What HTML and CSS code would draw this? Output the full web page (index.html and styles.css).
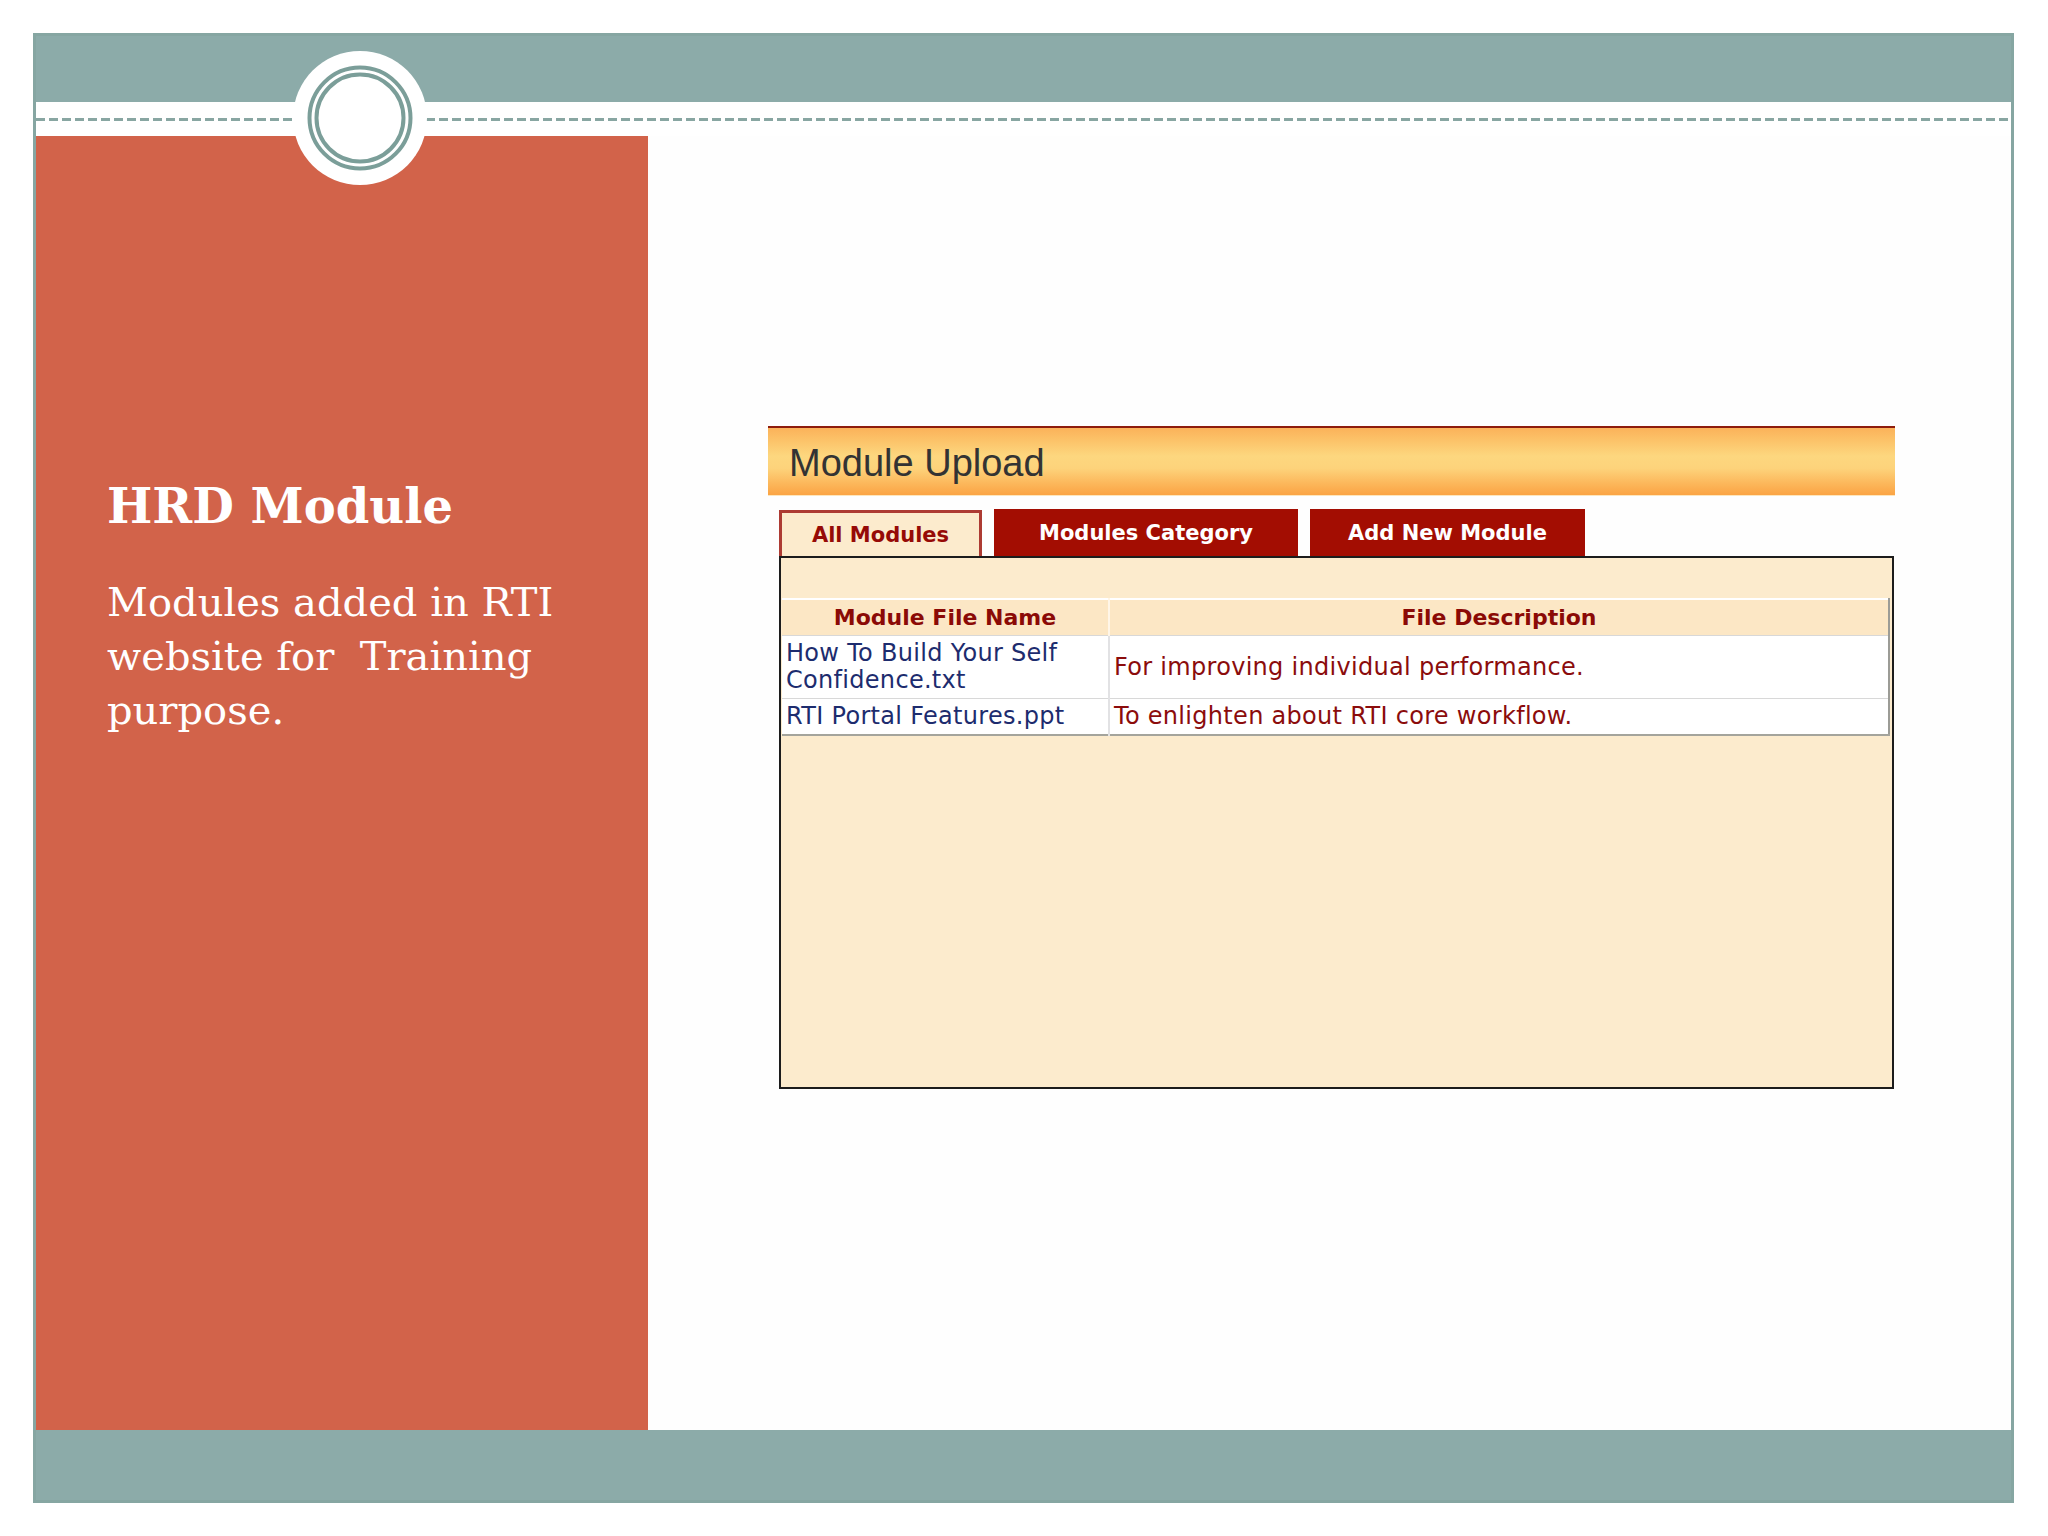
FILE: index.html
```html
<!DOCTYPE html>
<html lang="en">
<head>
<meta charset="utf-8">
<title>HRD Module</title>
<link rel="stylesheet" href="styles.css">
</head>
<body>
<div class="slide">
  <div class="top-band"></div>
  <div class="rule-band"><div class="dash-line"></div></div>
  <div class="main">
    <div class="left-panel">
      <h1 class="title">HRD Module</h1>
      <p class="body-text">Modules added in RTI website for&nbsp; Training purpose.</p>
    </div>
    <div class="right-panel">
      <div class="widget">
        <div class="widget-header">Module Upload</div>
        <div class="tabs">
          <div class="tab tab-active tab-all">All Modules</div>
          <div class="tab tab-cat">Modules Category</div>
          <div class="tab tab-add">Add New Module</div>
        </div>
        <div class="tab-body">
          <table class="modules">
            <thead>
              <tr>
                <th class="col-name">Module File Name</th>
                <th class="col-desc">File Description</th>
              </tr>
            </thead>
            <tbody>
              <tr>
                <td class="file">How To Build Your Self<br>Confidence.txt</td>
                <td class="desc">For improving individual performance.</td>
              </tr>
              <tr>
                <td class="file">RTI Portal Features.ppt</td>
                <td class="desc">To enlighten about RTI core workflow.</td>
              </tr>
            </tbody>
          </table>
        </div>
      </div>
    </div>
  </div>
  <div class="bottom-band"></div>
  <div class="medallion">
    <svg width="134" height="134" viewBox="0 0 134 134">
      <circle cx="67" cy="67" r="67" fill="#ffffff"/>
      <circle cx="67" cy="67" r="50.5" fill="none" stroke="#7b9e99" stroke-width="4"/>
      <circle cx="67" cy="67" r="43.5" fill="none" stroke="#7b9e99" stroke-width="4"/>
    </svg>
  </div>
</div>
</body>
</html>
```

FILE: styles.css
```css
html, body {
  margin: 0;
  padding: 0;
  background: #ffffff;
}

.slide {
  position: relative;
  box-sizing: border-box;
  width: 1981px;
  height: 1470px;
  margin: 33px 0 0 33px;
  border: 3px solid #86a6a2;
  display: flex;
  flex-direction: column;
  background: #fefefe;
}

.top-band {
  height: 66px;
  background: #8caba9;
  flex: none;
}

.rule-band {
  height: 34px;
  flex: none;
  box-sizing: border-box;
  padding-top: 16px;
  background: #ffffff;
}

.dash-line {
  height: 3px;
  background: repeating-linear-gradient(to right, #88a6a2 0 9px, transparent 9px 13px);
}

.main {
  flex: 1;
  display: flex;
}

.left-panel {
  width: 612px;
  flex: none;
  background: #d2634a;
  box-sizing: border-box;
  padding: 342px 30px 0 71px;
  color: #ffffff;
}

.title {
  margin: 0;
  font-family: "DejaVu Serif", "Liberation Serif", serif;
  font-weight: bold;
  font-size: 48px;
  line-height: 56px;
}

.body-text {
  margin: 41px 0 0 0;
  font-family: "DejaVu Serif", "Liberation Serif", serif;
  font-size: 40px;
  line-height: 54px;
}

.right-panel {
  flex: 1;
  box-sizing: border-box;
  padding: 290px 0 0 120px;
  background: #fefefe;
}

.widget {
  width: 1127px;
}

.widget-header {
  box-sizing: border-box;
  height: 70px;
  border-top: 2px solid #8e1c0c;
  border-bottom: 1px solid #fde6bd;
  background: linear-gradient(to bottom, #fbb25a 0%, #fcc46a 20%, #fdd77f 42%, #fdd37b 60%, #fcb85c 82%, #fba444 100%);
  padding-left: 21px;
  font-family: "Liberation Sans", Arial, sans-serif;
  font-size: 38px;
  line-height: 70px;
  color: #333333;
}

.tabs {
  display: flex;
  gap: 12px;
  margin-top: 13px;
  padding-left: 11px;
  height: 47px;
}

.tab {
  box-sizing: border-box;
  height: 47px;
  display: flex;
  align-items: center;
  justify-content: center;
  font-family: "DejaVu Sans", Verdana, sans-serif;
  font-weight: bold;
  font-size: 21px;
  color: #ffffff;
  background: #a30d02;
}

.tab-active {
  background: #fcebcd;
  color: #960a06;
  border: 3px solid #ad3b33;
  border-bottom: none;
  margin-top: 1px;
  height: 46px;
}

.tab-all { width: 203px; }
.tab-cat { width: 304px; }
.tab-add { width: 275px; }

.tab-body {
  box-sizing: border-box;
  width: 1115px;
  height: 533px;
  margin-left: 11px;
  border: 2px solid #1c1c1c;
  background: #fcebcd;
  padding: 40px 2px 0 1px;
}

.modules {
  width: 100%;
  border-collapse: collapse;
  border-top: 2px solid #ffffff;
  border-right: 2px solid #9c9c96;
  border-bottom: 2px solid #a4a49c;
  font-family: "DejaVu Sans", Verdana, sans-serif;
}

.modules th {
  height: 35px;
  padding: 0;
  background: #fce7c5;
  color: #8b0a06;
  font-weight: bold;
  font-size: 22px;
  text-align: center;
  vertical-align: middle;
}

.modules th.col-name {
  width: 326px;
  border-right: 2px solid #fff6e8;
}

.modules td {
  background: #ffffff;
  font-size: 24px;
  line-height: 27px;
  letter-spacing: 0.3px;
  padding: 4px 4px;
  vertical-align: middle;
  border-top: 1px solid #d8d8d8;
}

.modules td.file {
  color: #1d2c6e;
  border-right: 2px solid #e2e2e4;
}

.modules td.desc {
  color: #8b0c0c;
}

.bottom-band {
  height: 70px;
  flex: none;
  background: #8caba9;
}

.medallion {
  position: absolute;
  left: 257px;
  top: 15px;
  width: 134px;
  height: 134px;
}

.medallion svg {
  display: block;
}
```
